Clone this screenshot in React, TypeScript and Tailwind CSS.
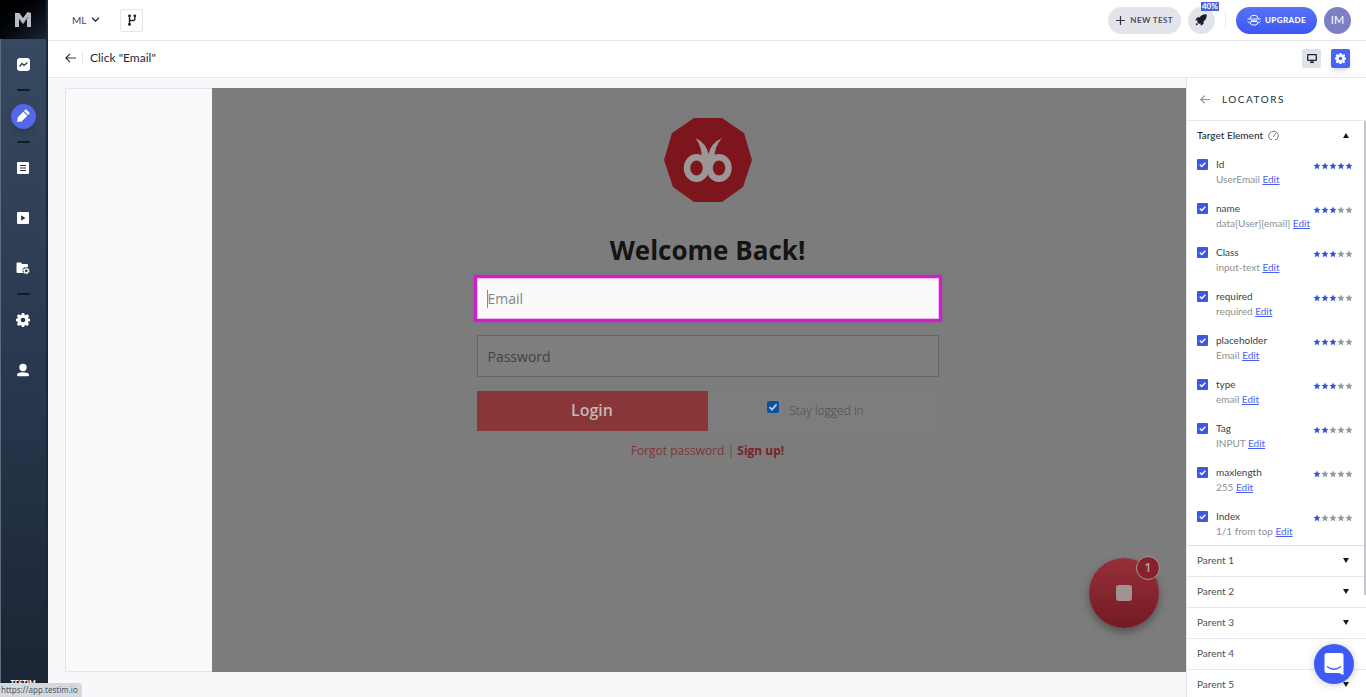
import React from "react";

type Locator = { name: string; value: string; stars: number };

const locators: Locator[] = [
  { name: "Id", value: "UserEmail", stars: 5 },
  { name: "name", value: "data[User][email]", stars: 3 },
  { name: "Class", value: "input-text", stars: 3 },
  { name: "required", value: "required", stars: 3 },
  { name: "placeholder", value: "Email", stars: 3 },
  { name: "type", value: "email", stars: 3 },
  { name: "Tag", value: "INPUT", stars: 2 },
  { name: "maxlength", value: "255", stars: 1 },
  { name: "Index", value: "1/1 from top", stars: 1 },
];

const parents = ["Parent 1", "Parent 2", "Parent 3", "Parent 4", "Parent 5"];

function GearIcon({ className, hole }: { className: string; hole: string }) {
  return (
    <svg viewBox="0 0 24 24" className={className} fill="currentColor" aria-hidden="true">
      <path d="M10 0h4l.8 3.200 1.900.8 2.900-1.700 2.800 2.800-1.700 2.900.8 1.900L24 10v4l-2.700.6-.8 1.900 1.700 2.900-2.800 2.800-2.900-1.700-1.900.8L14 24h-4l-.8-2.700-1.900-.8-2.900 1.700-2.800-2.800 1.700-2.900-.8-1.900L0 14v-4l2.500-.6.8-1.900L1.600 4.900l2.800-2.800L7.300 3.800l1.900-.8z" />
      <circle cx="12" cy="12" r="4" fill={hole} />
    </svg>
  );
}

function Bar() {
  return <div className="h-[2px] w-[13px] rounded-full bg-[#111c29]" />;
}

function NavItem({ label, children }: { label: string; children: React.ReactNode }) {
  return (
    <a href="#" aria-label={label} className="flex h-[50px] w-full items-center justify-center text-white">
      {children}
    </a>
  );
}

function Sidebar() {
  return (
    <nav className="flex w-12 shrink-0 flex-col items-center overflow-hidden border-r-2 border-[#1c2838] bg-linear-to-b from-[#384b62] via-[#2b3950] to-[#1a2433] shadow-[inset_1px_0_0_#5d6b7b]">
      <a href="#" aria-label="Home" className="flex h-[39px] w-full shrink-0 items-center justify-center bg-linear-to-br from-black to-[#1b2735]">
        <svg viewBox="0 0 16 15" className="h-[15px] w-4" aria-hidden="true">
          <path d="M0 1h4.500l3.500 5L12.500 0 16 1v14h-4V7l-4 5-4-5v8H0z" fill="#b9bdc2" />
          <path d="M4 7l4 5 5-7" fill="none" stroke="#5c636b" strokeWidth="1" />
        </svg>
      </a>
      <NavItem label="Dashboard">
        <svg viewBox="0 0 13 13" className="size-[13px]" aria-hidden="true">
          <rect width="13" height="13" rx="3" fill="#fff" />
          <path d="M2.500 8.500l2.500-3 2 2L10.500 4.500" fill="none" stroke="#2c3b50" strokeWidth="1.200" />
        </svg>
      </NavItem>
      <Bar />
      <NavItem label="Editor">
        <span className="flex size-[25px] items-center justify-center rounded-full bg-[#5168e8] shadow-md">
          <svg viewBox="0 0 14 14" className="size-[14px]" fill="#fff" aria-hidden="true">
            <path d="M7.200 2.700l4.100 4.100-5.200 5.100c-.4.400-.8.500-1.300.5L1.100 13l.5-3.800c0-.5.200-.9.500-1.300z" />
            <path d="M8 1.900L9 .9c.6-.5 1.300-.5 1.800 0l2.300 2.300c.5.500.5 1.200 0 1.800l-1 1z" />
          </svg>
        </span>
      </NavItem>
      <Bar />
      <NavItem label="Test list">
        <svg viewBox="0 0 12 12" className="size-3" aria-hidden="true">
          <rect width="12" height="12" rx="1" fill="#fff" />
          <path d="M3 3.500h6M3 6h6M3 8.500h6" stroke="#2c3b50" strokeWidth="1" />
        </svg>
      </NavItem>
      <NavItem label="Runs">
        <svg viewBox="0 0 12 12" className="size-3" aria-hidden="true">
          <rect width="12" height="12" rx="1" fill="#fff" />
          <path d="M4.200 3.500L8.500 6 4.200 8.500z" fill="#1f2c3e" />
        </svg>
      </NavItem>
      <NavItem label="Project">
        <svg viewBox="0 0 14 13" className="h-[13px] w-[14px]" aria-hidden="true">
          <path d="M.5 1.500Q.5.500 1.500.500H5l1.300 1.500H11q1 0 1 1V11H1.500q-1 0-1-1z" fill="#fff" />
          <circle cx="10.200" cy="8.800" r="3.700" fill="#2c3b50" />
          <circle cx="10.200" cy="8.800" r="2" fill="none" stroke="#fff" strokeWidth="1.300" />
          <circle cx="10.200" cy="8.800" r="3" fill="none" stroke="#fff" strokeWidth="1" strokeDasharray="1.570 1.570" />
        </svg>
      </NavItem>
      <Bar />
      <NavItem label="Settings">
        <GearIcon className="size-[14px]" hole="#2a384c" />
      </NavItem>
      <NavItem label="Account">
        <svg viewBox="0 0 12 14" className="h-[14px] w-3" fill="#fff" aria-hidden="true">
          <circle cx="6" cy="4.500" r="3.700" />
          <path d="M0 12q0-2.800 6-2.800T12 12q0 1.200-1.500 1.200h-9Q0 13.200 0 12z" />
        </svg>
      </NavItem>
      <div className="mt-auto mb-[14px] h-1 shrink-0 overflow-hidden text-[7px] leading-[8px] font-black text-white">TESTIM</div>
    </nav>
  );
}

function TopBar() {
  return (
    <header className="flex h-[41px] shrink-0 items-center border-b border-[#e9e9ed] bg-white pr-[15px] pl-6">
      <button className="flex items-center gap-[5px] text-[10px] text-[#3d444b]">
        ML
        <svg viewBox="0 0 10 7" className="h-[6px] w-[9px]" fill="none" stroke="#30383f" strokeWidth="1.700" aria-hidden="true">
          <path d="M1 1l4 4 4-4" />
        </svg>
      </button>
      <button aria-label="Branch" className="ml-5 flex size-[23px] items-center justify-center rounded-[2px] border border-[#e6e6ea]">
        <svg viewBox="0 0 10 12" className="h-3 w-[10px]" aria-hidden="true">
          <path d="M2.500 2v8M7.800 2v3.200q0 1.300-1.300 1.300h-4" fill="none" stroke="#1f262c" strokeWidth="1.400" />
          <circle cx="2.500" cy="1.800" r="1.400" fill="#1f262c" />
          <circle cx="7.800" cy="1.800" r="1.400" fill="#1f262c" />
          <circle cx="2.500" cy="10.200" r="1.500" fill="#1f262c" />
        </svg>
      </button>
      <div className="ml-auto flex items-center">
        <button className="flex h-[27px] items-center gap-[5px] rounded-full bg-[#e3e4ea] px-2 text-[8px] font-bold tracking-wider text-[#4a5158]">
          <svg viewBox="0 0 9 9" className="size-[9px]" stroke="#30373e" strokeWidth="1.200" aria-hidden="true">
            <path d="M4.500 0v9M0 4.500h9" />
          </svg>
          NEW TEST
        </button>
        <button aria-label="What's new" className="relative ml-[7px] flex size-[27px] items-center justify-center rounded-full bg-[#e3e4ea]">
          <svg viewBox="0 0 12 12" className="size-3" fill="#16202b" aria-hidden="true">
            <path d="M11.700.3C8.500 0 6.300 1 4.700 3.300L2 3.600.3 6.300l2.500.2-.7 1.400 2 2 1.400-.7.200 2.500 2.700-1.700.3-2.700C11 5.700 12 3.500 11.700.3z" />
            <path d="M1.700 8.800L.5 11.500l2.700-1.200z" />
          </svg>
          <span className="absolute -top-[5px] left-[13px] bg-[#4a63d8] px-[1px] text-[8px] leading-[9px] font-bold text-white">40%</span>
        </button>
        <div className="ml-[10px] h-4 w-px bg-[#ececf0]" />
        <button className="ml-[10px] flex h-[27px] items-center gap-1 rounded-full bg-linear-to-b from-[#5873f4] to-[#3c56f4] px-[11px] text-[8px] font-black tracking-wider text-white">
          <svg viewBox="0 0 14 12" className="h-3 w-[14px]" fill="none" stroke="#fff" strokeWidth="1" aria-hidden="true">
            <path d="M3 4.500Q3.500 1.500 5.500 1.500h3Q10.500 1.500 11 4.500M.5 5h13M3 7.500Q3.500 11 5.500 11h3Q10.500 11 11 7.500M.5 7.500l2 1.500M13.500 7.500l-2 1.500" />
            <path d="M4 7.200h6" strokeWidth="1.600" />
          </svg>
          UPGRADE
        </button>
        <button aria-label="Account menu" className="ml-[7px] flex size-[27px] items-center justify-center rounded-full bg-[#7b80c4] text-[11px] text-white">
          IM
        </button>
      </div>
    </header>
  );
}

function StepBar() {
  return (
    <div className="flex h-[37px] shrink-0 items-center border-b border-[#e6e6eb] bg-white pr-4 pb-[2px] pl-[17px]">
      <button aria-label="Back">
        <svg viewBox="0 0 11 10" className="h-[10px] w-[11px]" fill="none" stroke="#30373e" strokeWidth="1.200" aria-hidden="true">
          <path d="M11 5H1M5 .8L.8 5 5 9.200" />
        </svg>
      </button>
      <div className="ml-[6px] h-3 w-px bg-[#e6e6ea]" />
      <h1 className="ml-[7px] text-[12px] text-[#262c32]">Click "Email"</h1>
      <div className="ml-auto flex gap-[10px]">
        <button aria-label="Screen" className="flex size-[19px] items-center justify-center rounded-[2px] bg-[#dfe2e8]">
          <svg viewBox="0 0 10 9" className="h-[9px] w-[10px]" aria-hidden="true">
            <rect x=".7" y=".7" width="8.600" height="5.600" rx=".6" fill="none" stroke="#1a222a" strokeWidth="1.300" />
            <path d="M3 8.300h4M5 6v2" stroke="#1a222a" strokeWidth="1.300" />
          </svg>
        </button>
        <button aria-label="Properties" className="flex size-[19px] items-center justify-center rounded-[2px] bg-[#4863f5] text-white shadow-md">
          <GearIcon className="size-[11px]" hole="#4863f5" />
        </button>
      </div>
    </div>
  );
}

function LoginPreview() {
  return (
    <div className="relative flex min-w-0 flex-1 flex-col items-center bg-[#7c7c7c] pt-[30px] pl-[17px] font-['Open_Sans',sans-serif]">
      <svg viewBox="0 0 88 84" className="h-[84px] w-[88px]" aria-hidden="true">
        <path d="M30 0h28l22 15 8 27-9 27-21 15H30L9 69 0 42 8 15z" fill="#7c161c" />
        <g fill="none" stroke="#9c9797" strokeWidth="6.500">
          <ellipse cx="32.500" cy="50" rx="9.500" ry="10.800" />
          <ellipse cx="55" cy="50" rx="9.500" ry="10.800" />
        </g>
        <path d="M31.500 20Q42 25 44.500 36 47 25 58 20 50 29 50.500 41L47 49h-6l-3-8Q38 29 31.500 20z" fill="#9c9797" />
      </svg>
      <h2 className="mt-[30px] text-[26px] leading-9 font-bold text-[#141414]">Welcome Back!</h2>
      <form className="mt-[7px] flex w-full max-w-[462px] flex-col" onSubmit={(e) => e.preventDefault()}>
        <div className="relative -mx-[3px] flex">
          <input
            type="email"
            aria-label="Email"
            placeholder="Email"
            className="h-[47px] w-full border-[3px] border-[#cc22cc] bg-[#fafafa] px-[11px] text-[14px] text-[#555] shadow-[inset_0_0_0_1px_#f7b5f7,0_0_2px_#b23ab4] outline-none placeholder:text-[#858585] placeholder:opacity-100"
          />
          <span className="absolute top-[15px] left-[13px] h-[18px] w-px bg-[#888]" />
        </div>
        <input
          type="password"
          aria-label="Password"
          placeholder="Password"
          className="mt-[13px] h-[42px] border border-[#666] bg-[#7e7e7e] px-[10px] text-[14px] outline-none placeholder:text-[#434343] placeholder:opacity-100"
        />
        <div className="mt-[14px] flex h-10">
          <button className="w-1/2 bg-[#883638] pb-[2px] text-[16px] font-semibold text-[#c0b9b9]">Login</button>
          <label className="flex w-1/2 items-center justify-center gap-[10px] bg-[#7d7d7d] pr-[15px] text-[12px] font-light text-[#4c4c4c]">
            <span className="mb-2 grid">
              <input type="checkbox" defaultChecked className="col-start-1 row-start-1 size-3 appearance-none rounded-[2px] bg-[#0a52a0]" />
              <svg viewBox="0 0 12 12" className="pointer-events-none col-start-1 row-start-1 size-3" fill="none" stroke="#c5cad0" strokeWidth="1.800" aria-hidden="true">
                <path d="M2.500 6.200L5 8.700 9.500 3.300" />
              </svg>
            </span>
            Stay logged in
          </label>
        </div>
      </form>
      <p className="mt-[10px] text-[12px] leading-5 text-[#7d3638]">
        <a href="#">Forgot password</a> <span className="text-[#555]">|</span>{" "}
        <a href="#" className="font-bold text-[#7a2226]">Sign up!</a>
      </p>
      <button
        aria-label="Stop recording"
        className="absolute right-[27px] bottom-11 flex size-[70px] items-center justify-center rounded-full bg-linear-to-b from-[#972f38] to-[#741a23] shadow-[0_4px_9px_rgba(0,0,0,0.35)]"
      >
        <span className="size-4 rounded-[3px] bg-[#a19293]" />
        <span className="absolute -top-[2px] -right-[1px] flex size-6 items-center justify-center rounded-full border border-[#a39b9b] bg-[#85222b] text-[12px] font-semibold text-[#b3a5a6]">1</span>
      </button>
    </div>
  );
}

function Stars({ count }: { count: number }) {
  return (
    <div role="img" aria-label={`${count} of 5 stars`} className="mt-[5px] ml-auto flex">
      {[1, 2, 3, 4, 5].map((n) => (
        <svg key={n} viewBox="0 0 8 8" className={n <= count ? "size-2 text-[#3653dc]" : "size-2 text-[#94979b]"} fill="currentColor" aria-hidden="true">
          <path d="M4 .4l1 2.400 2.500.3-1.900 1.700.6 2.500L4 6 1.800 7.300l.6-2.500L.5 3.100 3 2.800z" />
        </svg>
      ))}
    </div>
  );
}

function LocatorRow({ item }: { item: Locator }) {
  const id = `locator-${item.name}`;
  return (
    <li className="flex h-11 items-start pt-2 pr-[13px] pl-[10px]">
      <span className="mt-[2px] grid">
        <input id={id} type="checkbox" defaultChecked className="col-start-1 row-start-1 size-[11px] appearance-none rounded-[1px] bg-[#3d58e4]" />
        <svg viewBox="0 0 11 11" className="pointer-events-none col-start-1 row-start-1 size-[11px]" fill="none" stroke="#fff" strokeWidth="1.400" aria-hidden="true">
          <path d="M2.800 5.600l2 1.900 3.500-3.800" />
        </svg>
      </span>
      <div className="ml-2 whitespace-nowrap">
        <label htmlFor={id} className="block text-[10px] leading-[14px] text-[#3a4147]">{item.name}</label>
        <p className="mt-px text-[10px] leading-[14px] text-[#8d9094]">
          {item.value}{" "}
          <a href="#" className="text-[#4a5ff0] underline">Edit</a>
        </p>
      </div>
      <Stars count={item.stars} />
    </li>
  );
}

function LocatorsPanel() {
  return (
    <aside className="relative flex w-[180px] shrink-0 flex-col overflow-hidden border-l border-[#e2e2e6] bg-white">
      <div className="flex h-[43px] shrink-0 items-center border-b border-[#e9e9ed] pl-[13px]">
        <button aria-label="Back to step">
          <svg viewBox="0 0 10 9" className="h-[9px] w-[10px]" fill="none" stroke="#8f9499" strokeWidth="1.100" aria-hidden="true">
            <path d="M10 4.500H1M4.800.7L.8 4.500l4 3.800" />
          </svg>
        </button>
        <h2 className="ml-3 text-[10px] tracking-[0.15em] text-[#262e35]">LOCATORS</h2>
      </div>
      <section className="shrink-0 border-b border-[#dfe0e4]">
        <button className="flex h-[28px] w-full items-center pr-[17px] pl-[10px] text-[10px] font-medium text-[#262e35]">
          Target Element
          <svg viewBox="0 0 11 11" className="ml-[5px] size-[11px]" fill="none" stroke="#777c80" strokeWidth="1" aria-hidden="true">
            <path d="M2.200 9.500A4.800 4.800 0 1 1 8.800 9.500M2.200 9.500h1.800M7 9.500h1.800M5.200 7l2.600-3.800" />
          </svg>
          <svg viewBox="0 0 6 5" className="ml-auto h-[5px] w-[6px]" fill="#111c26" aria-hidden="true">
            <path d="M3 0l3 5H0z" />
          </svg>
        </button>
        <ul>
          {locators.map((item) => (
            <LocatorRow key={item.name} item={item} />
          ))}
        </ul>
      </section>
      {parents.map((name) => (
        <button key={name} className="flex h-[31px] shrink-0 items-center border-b border-[#e9e9ed] pr-[17px] pb-[2px] pl-[10px] text-[10px] text-[#4a5157]">
          {name}
          <svg viewBox="0 0 6 5" className="ml-auto h-[5px] w-[6px]" fill="#111c26" aria-hidden="true">
            <path d="M3 5l3-5H0z" />
          </svg>
        </button>
      ))}
      <div className="absolute top-[43px] right-0 h-[474px] w-[2px] bg-[#c3c5c8]" />
      <button
        aria-label="Open chat"
        className="absolute right-3 bottom-[13px] flex size-10 items-center justify-center rounded-full bg-[#3d5af6] shadow-[0_1px_8px_rgba(0,0,0,0.2)]"
      >
        <svg viewBox="0 0 20 22" className="h-[22px] w-5" aria-hidden="true">
          <path d="M3 0h14q2.500 0 2.500 2.500V22L15 20H3Q.5 20 .5 17.500v-15Q.5 0 3 0z" fill="#fff" />
          <path d="M3.500 13.800q6.500 5 13 0" fill="none" stroke="#3d5af6" strokeWidth="1.400" strokeLinecap="round" />
        </svg>
      </button>
    </aside>
  );
}

export default function App() {
  return (
    <div className="relative flex h-screen overflow-hidden bg-[#f8f8fb] font-['Lato',sans-serif]">
      <Sidebar />
      <div className="flex min-w-0 flex-1 flex-col">
        <TopBar />
        <StepBar />
        <div className="flex min-h-0 flex-1">
          <main className="flex min-w-0 flex-1 pt-[10px] pb-[25px] pl-[17px]">
            <div className="w-[147px] shrink-0 border border-r-0 border-[#e3e3ec] bg-[#f9f9fc]" />
            <LoginPreview />
          </main>
          <LocatorsPanel />
        </div>
      </div>
      <div className="absolute bottom-0 left-0 rounded-tr-[3px] bg-[#d5d8dc] py-[1px] pr-1 pl-[1px] font-['Noto_Sans',sans-serif] text-[8px] leading-[12px] text-[#50555a]">
        https://app.testim.io
      </div>
    </div>
  );
}
